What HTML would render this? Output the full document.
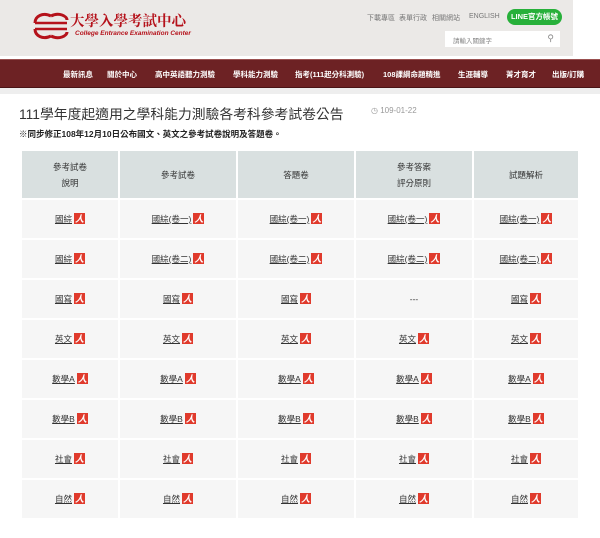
<!DOCTYPE html>
<html><head><meta charset="utf-8"><style>
*{margin:0;padding:0;box-sizing:border-box}
body{width:600px;height:538px;background:#fff;font-family:"Liberation Sans","Noto Sans CJK TC",sans-serif;position:relative;overflow:hidden}
.hdr{position:absolute;left:0;top:0;width:573px;height:56px;background:#ebe9e7}
.logo{position:absolute;left:33px;top:10px}
.ttl{position:absolute;left:70px;top:10px;color:#b5121b;font-family:"Noto Serif CJK SC",serif;font-size:14.5px;font-weight:bold;letter-spacing:0px}
.sub{position:absolute;left:75px;top:30px;color:#b5121b;font-style:italic;font-size:6.5px;font-weight:bold}
.tl{position:absolute;top:13px;font-size:7px;color:#777}
.line{position:absolute;left:507px;top:9px;width:55px;height:16px;background:#27b03a;border-radius:8px;color:#fff;font-size:7.5px;font-weight:bold;text-align:center;line-height:16px}
.srch{position:absolute;left:445px;top:31px;width:115px;height:16px;background:#fff;font-size:6.5px;color:#888;padding:4px 0 0 8px}
.nav{position:absolute;left:0;top:59px;width:600px;height:29px;background:#6d2224;border-top:1px solid #9a5050;border-bottom:1px solid #4a1416}
.nav span{position:absolute;top:9px;color:#fff;font-size:7.5px;font-weight:bold;white-space:nowrap}
.navsh{position:absolute;left:0;top:88px;width:600px;height:6px;background:#eee}
h1{position:absolute;left:19px;top:103px;font-size:13.8px;font-weight:normal;color:#333;white-space:nowrap}
.date{position:absolute;left:371px;top:106px;font-size:8px;color:#999}
.note{position:absolute;left:19px;top:128px;font-size:8.5px;font-weight:bold;color:#222}
table{position:absolute;left:20px;top:149px;width:560px;border-collapse:separate;border-spacing:2px;table-layout:fixed}
td{background:#f6f6f6;text-align:center;font-size:8.5px;color:#333;height:38px}
th{background:#d9e0e0;font-weight:normal;font-size:8.5px;color:#333;height:47px;line-height:16px}
td u{text-decoration:underline}
.p{display:inline-block;width:11px;height:11px;background:#e03a2c;vertical-align:-2px;margin-left:2px;position:relative}
.p:after{content:"人";position:absolute;left:1px;top:-1px;color:#fff;font-size:9px;font-weight:bold}
</style></head><body>
<div class="hdr">
<svg class="logo" width="36" height="32" viewBox="0 0 36 32"><g fill="none" stroke="#b5121b" stroke-width="3"><path d="M18 6 C10 2 2 6 2 13 M18 26 C10 30 2 26 2 19 M18 6 C26 2 34 6 34 10 M18 26 C26 30 34 26 34 22"/><path d="M2 13 H34 M2 19 H34" stroke-width="2.5"/></g></svg>
<div class="ttl">大學入學考試中心</div>
<div class="sub">College Entrance Examination Center</div>
<span class="tl" style="left:367px">下載專區</span><span class="tl" style="left:399px">表單行政</span><span class="tl" style="left:432px">相關網站</span><span class="tl" style="left:469px">ENGLISH</span>
<div class="line">LINE官方帳號</div>
<div class="srch">請輸入關鍵字<span style="position:absolute;right:6px;top:2px;font-size:9px">⚲</span></div>
</div>
<div class="nav">
<span style="left:63px">最新訊息</span><span style="left:107px">關於中心</span><span style="left:155px">高中英語聽力測驗</span><span style="left:233px">學科能力測驗</span><span style="left:295px">指考(111起分科測驗)</span><span style="left:383px">108課綱命題精進</span><span style="left:458px">生涯輔導</span><span style="left:506px">菁才育才</span><span style="left:552px">出版/訂購</span>
</div>
<div class="navsh"></div>
<h1>111學年度起適用之學科能力測驗各考科參考試卷公告</h1>
<div class="date">◷ 109-01-22</div>
<div class="note">※同步修正108年12月10日公布國文、英文之參考試卷說明及答題卷。</div>
<table>
<colgroup><col style="width:96px"><col style="width:116px"><col style="width:116px"><col style="width:116px"><col></colgroup>
<tr><th>參考試卷<br>說明</th><th>參考試卷</th><th>答題卷</th><th>參考答案<br>評分原則</th><th>試題解析</th></tr>
<tr><td><u>國綜</u><i class="p"></i></td><td><u>國綜(卷一)</u><i class="p"></i></td><td><u>國綜(卷一)</u><i class="p"></i></td><td><u>國綜(卷一)</u><i class="p"></i></td><td><u>國綜(卷一)</u><i class="p"></i></td></tr>
<tr><td><u>國綜</u><i class="p"></i></td><td><u>國綜(卷二)</u><i class="p"></i></td><td><u>國綜(卷二)</u><i class="p"></i></td><td><u>國綜(卷二)</u><i class="p"></i></td><td><u>國綜(卷二)</u><i class="p"></i></td></tr>
<tr><td><u>國寫</u><i class="p"></i></td><td><u>國寫</u><i class="p"></i></td><td><u>國寫</u><i class="p"></i></td><td>---</td><td><u>國寫</u><i class="p"></i></td></tr>
<tr><td><u>英文</u><i class="p"></i></td><td><u>英文</u><i class="p"></i></td><td><u>英文</u><i class="p"></i></td><td><u>英文</u><i class="p"></i></td><td><u>英文</u><i class="p"></i></td></tr>
<tr><td><u>數學A</u><i class="p"></i></td><td><u>數學A</u><i class="p"></i></td><td><u>數學A</u><i class="p"></i></td><td><u>數學A</u><i class="p"></i></td><td><u>數學A</u><i class="p"></i></td></tr>
<tr><td><u>數學B</u><i class="p"></i></td><td><u>數學B</u><i class="p"></i></td><td><u>數學B</u><i class="p"></i></td><td><u>數學B</u><i class="p"></i></td><td><u>數學B</u><i class="p"></i></td></tr>
<tr><td><u>社會</u><i class="p"></i></td><td><u>社會</u><i class="p"></i></td><td><u>社會</u><i class="p"></i></td><td><u>社會</u><i class="p"></i></td><td><u>社會</u><i class="p"></i></td></tr>
<tr><td><u>自然</u><i class="p"></i></td><td><u>自然</u><i class="p"></i></td><td><u>自然</u><i class="p"></i></td><td><u>自然</u><i class="p"></i></td><td><u>自然</u><i class="p"></i></td></tr>
</table>
</body></html>
